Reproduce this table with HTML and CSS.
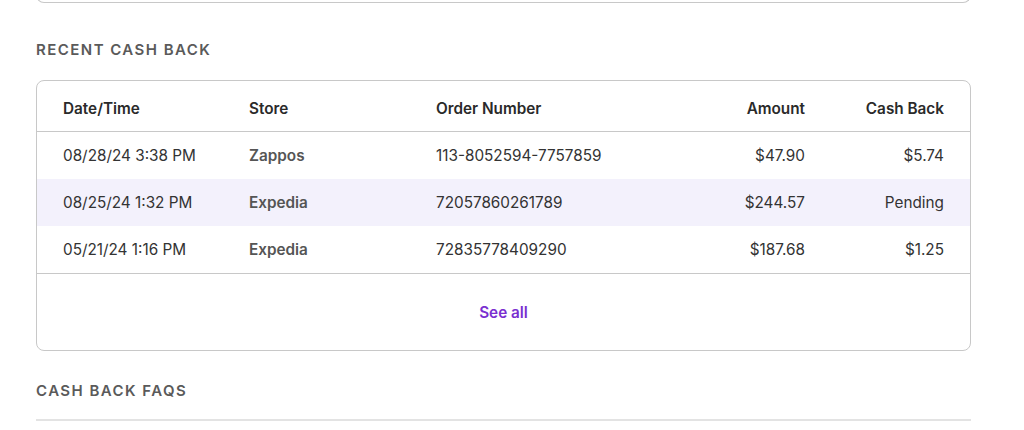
FILE: index.html
```html
<!DOCTYPE html>
<html lang="en">
<head>
<meta charset="utf-8">
<link rel="stylesheet" href="styles.css">
</head>
<body>
<div class="page">
  <div class="prev-card"></div>
  <h2 class="section-title">RECENT CASH BACK</h2>
  <div class="card">
    <div class="row head">
      <div>Date/Time</div>
      <div>Store</div>
      <div>Order Number</div>
      <div class="num">Amount</div>
      <div class="num">Cash Back</div>
    </div>
    <div class="row">
      <div>08/28/24 3:38 PM</div>
      <div class="store">Zappos</div>
      <div>113-8052594-7757859</div>
      <div class="num">$47.90</div>
      <div class="num">$5.74</div>
    </div>
    <div class="row pending">
      <div>08/25/24 1:32 PM</div>
      <div class="store">Expedia</div>
      <div>72057860261789</div>
      <div class="num">$244.57</div>
      <div class="num">Pending</div>
    </div>
    <div class="row">
      <div>05/21/24 1:16 PM</div>
      <div class="store">Expedia</div>
      <div>72835778409290</div>
      <div class="num">$187.68</div>
      <div class="num">$1.25</div>
    </div>
    <div class="footer"><a href="#" class="see-all">See all</a></div>
  </div>
  <h2 class="section-title faq">CASH BACK FAQS</h2>
  <div class="divider"></div>
</div>
</body>
</html>
```
FILE: styles.css
```css
* { box-sizing: border-box; }
html, body { margin: 0; padding: 0; background: #fff; }
body { font-family: Inter, "Noto Sans", sans-serif; color: #333; }
.page { width: 935px; margin-left: 36px; }
.prev-card {
  height: 22px;
  margin-top: -19px;
  border: 1px solid #c8c8c8;
  border-top: none;
  border-radius: 0 0 8px 8px;
}
.section-title {
  margin: 0;
  padding-top: 37px;
  height: 77px;
  font-size: 15px;
  line-height: 20px;
  font-weight: 600;
  letter-spacing: 1.45px;
  color: #5a5a5a;
}
.card {
  border: 1px solid #c8c8c8;
  border-radius: 8px;
  overflow: hidden;
}
.row {
  display: grid;
  grid-template-columns: 186px 187px 1fr 119px 139px;
  align-items: center;
  padding: 0 26px;
  height: 47px;
  font-size: 15.3px;
  color: #333;
}
.row.head {
  height: 51px;
  padding-top: 5px;
  font-weight: 600;
  color: #2a2a2a;
  border-bottom: 1px solid #c8c8c8;
}
.row.pending { background: #f3f1fc; }
.store { font-weight: 600; color: #555; }
.num { text-align: right; }
.footer {
  border-top: 1px solid #c8c8c8;
  height: 77px;
  display: flex;
  align-items: center;
  justify-content: center;
}
.see-all {
  color: #7a2fd0;
  font-weight: 600;
  font-size: 15.3px;
  text-decoration: none;
}
.section-title.faq {
  padding-top: 30px;
  height: 68px;
}
.divider { border-top: 2px solid #e3e3e3; }
```
